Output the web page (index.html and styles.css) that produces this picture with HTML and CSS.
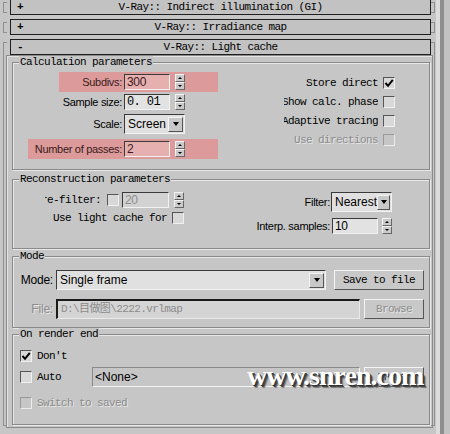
FILE: index.html
```html
<!DOCTYPE html>
<html lang="en">
<head>
    <meta charset="UTF-8">
    <meta name="viewport" content="width=device-width, initial-scale=1.0">
    <title>V-Ray:: Light cache</title>
    <link rel="stylesheet" href="styles.css">
</head>
<body>
<div class="window">
    <div class="panel">
        <div class="rollout first">
            <div class="rollout-header mono"><span class="toggle">+</span><span class="title">V-Ray:: Indirect illumination (GI)</span></div>
        </div>
        <div class="rollout">
            <div class="rollout-header mono"><span class="toggle">+</span><span class="title">V-Ray:: Irradiance map</span></div>
        </div>
        <div class="rollout open">
            <div class="rollout-header mono"><span class="toggle">-</span><span class="title">V-Ray:: Light cache</span></div>
            <div class="rollout-body">

                <!-- Calculation parameters -->
                <div class="group calc">
                    <div class="group-title mono">Calculation parameters</div>
                    <div class="calc-body">
                        <div class="calc-left">
                            <div class="lrow hl subdivs">
                                <span>Subdivs:</span>
                                <div class="spin-field"><div class="field pink">300</div><div class="spinner"><i></i><i></i></div></div>
                            </div>
                            <div class="lrow sample">
                                <span>Sample size:</span>
                                <div class="spin-field"><div class="field mono">0. 01</div><div class="spinner"><i></i><i></i></div></div>
                            </div>
                            <div class="lrow scale">
                                <span>Scale:</span>
                                <div class="dropdown scale-dd"><span>Screen</span><div class="dd-btn"></div></div>
                            </div>
                            <div class="lrow hl passes">
                                <span>Number of passes:</span>
                                <div class="spin-field"><div class="field pink">2</div><div class="spinner"><i></i><i></i></div></div>
                            </div>
                        </div>
                        <div class="calc-right mono">
                            <div class="crow">
                                <div class="clip"><span>Store direct</span></div>
                                <div class="cb on"><svg viewBox="0 0 10 10"><path d="M1.5 5 L4 7.8 L8.8 1.8" /></svg></div>
                            </div>
                            <div class="crow">
                                <div class="clip"><span>Show calc. phase</span></div>
                                <div class="cb"></div>
                            </div>
                            <div class="crow">
                                <div class="clip"><span>Adaptive tracing</span></div>
                                <div class="cb"></div>
                            </div>
                            <div class="crow disabled">
                                <div class="clip"><span>Use directions</span></div>
                                <div class="cb off"></div>
                            </div>
                        </div>
                    </div>
                </div>

                <!-- Reconstruction parameters -->
                <div class="group recon">
                    <div class="group-title mono">Reconstruction parameters</div>
                    <div class="recon-body">
                        <div class="recon-left">
                            <div class="prefilter">
                                <div class="clip mono pre-lbl"><span>Pre-filter:</span></div>
                                <div class="cb"></div>
                                <div class="spin-field"><div class="field off">20</div><div class="spinner"><i></i><i></i></div></div>
                            </div>
                            <div class="uselc">
                                <span class="mono">Use light cache for</span>
                                <div class="cb"></div>
                            </div>
                        </div>
                        <div class="recon-right">
                            <div class="rrow filter">
                                <span>Filter:</span>
                                <div class="dropdown filter-dd"><span>Nearest</span><div class="dd-btn"></div></div>
                            </div>
                            <div class="rrow interp">
                                <span>Interp. samples:</span>
                                <div class="spin-field"><div class="field">10</div><div class="spinner"><i></i><i></i></div></div>
                            </div>
                        </div>
                    </div>
                </div>

                <!-- Mode -->
                <div class="group mode">
                    <div class="group-title mono">Mode</div>
                    <div class="mode-body">
                        <div class="mrow">
                            <span class="mlabel">Mode:</span>
                            <div class="dropdown mode-dd"><span>Single frame</span><div class="dd-btn"></div></div>
                            <div class="btn mono save-btn">Save to file</div>
                        </div>
                        <div class="mrow file-row">
                            <span class="mlabel disabled">File:</span>
                            <div class="path-field mono">D:\目做图\2222.vrlmap</div>
                            <div class="btn mono browse disabled">Browse</div>
                        </div>
                    </div>
                </div>

                <!-- On render end -->
                <div class="group end">
                    <div class="group-title mono">On render end</div>
                    <div class="end-body mono">
                        <div class="erow">
                            <div class="cb on"><svg viewBox="0 0 10 10"><path d="M1.5 5 L4 7.8 L8.8 1.8" /></svg></div>
                            <span>Don't</span>
                        </div>
                        <div class="erow auto-row">
                            <div class="cb"></div>
                            <span class="auto-lbl">Auto</span>
                            <div class="none-field">&lt;None&gt;</div>
                            <div class="btn browse small">Browse</div>
                        </div>
                        <div class="erow switch-row disabled">
                            <div class="cb off"></div>
                            <span>Switch to saved</span>
                        </div>
                    </div>
                </div>

            </div>
        </div>
    </div>
    <div class="scroll"></div>
    <div class="watermark">www.snren.com</div>
</div>
</body>
</html>
```

FILE: styles.css
```css
:root {
    --panel: #c6c6c6;
    --dark-edge: #3a3a3a;
    --light-edge: #f2f2f2;
    --etch: #8a8a8a;
    --disabled: #8c8c8c;
    --pink: #dc9a9a;
    --pink-field: #e6b0b0;
}

* {
    margin: 0;
    padding: 0;
    box-sizing: border-box;
}

body {
    width: 450px;
    height: 434px;
    overflow: hidden;
    background: var(--panel);
    color: #000;
    font-family: "Liberation Sans", Arial, sans-serif;
    font-size: 11px;
    letter-spacing: -0.3px;
}

.mono {
    font-family: "Liberation Mono", "Noto Sans CJK SC", monospace;
    font-size: 11px;
    letter-spacing: -0.6px;
}

.window {
    position: relative;
    display: flex;
    height: 434px;
}

.panel {
    width: 436px;
}

.scroll {
    width: 14px;
    background: linear-gradient(to right, #dcdcdc 0 4px, #8e8e8e 4px 8px, #c2c2c2 8px);
}

/* rollouts */
.rollout {
    position: relative;
    margin: 0 1px 4px 3px;
    padding: 0 2px 0 3px;
}

.rollout.first {
    margin-top: -1px;
}

.rollout::before,
.rollout::after {
    content: "";
    position: absolute;
    top: 3px;
    bottom: 2px;
    width: 3px;
    border: 1px solid #909090;
}

.rollout::before {
    left: 0;
    border-right: none;
}

.rollout::after {
    right: 0;
    border-left: none;
}

.rollout-header {
    display: grid;
    height: 16px;
    margin: 0 2px 0 4px;
    border: 1px solid #1e1e1e;
    background: #c2c2c2;
    line-height: 14px;
}

.rollout-header > span {
    grid-area: 1 / 1;
}

.toggle {
    justify-self: start;
    padding-left: 6px;
    font-weight: bold;
}

.title {
    justify-self: center;
}

.rollout-body {
    border: 1px solid var(--etch);
    box-shadow: inset 1px 1px 0 #e4e4e4;
    padding: 0 2px 2px 5px;
}

/* group boxes */
.group {
    border: 1px solid var(--etch);
    box-shadow: 1px 1px 0 #e8e8e8, inset 1px 1px 0 #e8e8e8;
}

.group-title {
    width: fit-content;
    margin: -7px 0 0 6px;
    padding: 0 1px;
    line-height: 12px;
    background: var(--panel);
}

.calc { margin-top: 6px; height: 108px; }
.recon { margin-top: 9px; height: 70px; }
.mode { margin-top: 7px; height: 72px; }
.end { margin-top: 6px; height: 91px; }

/* shared controls */
.field {
    width: 46px;
    height: 16px;
    border: 1px solid;
    border-color: var(--dark-edge) var(--light-edge) var(--light-edge) var(--dark-edge);
    background: #e2e2e2;
    padding-left: 2px;
    line-height: 14px;
    font-size: 12px;
}

.field.pink {
    background: var(--pink-field);
    color: #3a1a1a;
}

.field.off {
    background: #d2d2d2;
    color: var(--disabled);
}

.spin-field {
    display: flex;
    gap: 5px;
}

.spinner {
    display: flex;
    flex-direction: column;
    width: 10px;
    height: 16px;
}

.spinner i {
    flex: 1;
    display: flex;
    align-items: center;
    justify-content: center;
    border: 1px solid;
    border-color: #f4f4f4 #666 #666 #f4f4f4;
    background: #cacaca;
}

.spinner i::after {
    content: "";
    border-left: 2px solid transparent;
    border-right: 2px solid transparent;
}

.spinner i:first-child::after {
    border-bottom: 2px solid #000;
}

.spinner i:last-child::after {
    border-top: 2px solid #000;
}

.dropdown {
    display: flex;
    align-items: center;
    height: 20px;
    border: 1px solid;
    border-color: var(--dark-edge) var(--light-edge) var(--light-edge) var(--dark-edge);
    background: #e0e0e0;
    padding: 0 1px 0 3px;
    font-size: 12px;
    letter-spacing: 0;
}

.dd-btn {
    display: flex;
    align-items: center;
    justify-content: center;
    width: 15px;
    height: 15px;
    margin-left: auto;
    border: 1px solid;
    border-color: #f4f4f4 #555 #555 #f4f4f4;
    background: #c8c8c8;
}

.dd-btn::after {
    content: "";
    border-top: 4px solid #000;
    border-left: 3.5px solid transparent;
    border-right: 3.5px solid transparent;
}

.cb {
    flex: none;
    width: 12px;
    height: 12px;
    border: 1px solid;
    border-color: #555 #f0f0f0 #f0f0f0 #555;
    background: #d8d8d8;
}

.cb.off {
    background: var(--panel);
    border-color: #999 #ececec #ececec #999;
}

.cb svg {
    display: block;
    width: 10px;
    height: 10px;
}

.cb svg path {
    fill: none;
    stroke: #000;
    stroke-width: 2;
}

.clip {
    display: flex;
    justify-content: flex-end;
    overflow: hidden;
    white-space: nowrap;
}

.clip span {
    flex: none;
}

.disabled,
.disabled .clip {
    color: var(--disabled);
    text-shadow: 1px 1px 0 #e6e6e6;
}

.btn {
    display: flex;
    align-items: center;
    justify-content: center;
    height: 20px;
    border: 1px solid;
    border-color: #f4f4f4 #555 #555 #f4f4f4;
    background: #c8c8c8;
}

/* calculation parameters */
.calc-body {
    display: flex;
    justify-content: space-between;
}

.calc-left {
    width: 205px;
    padding-top: 4px;
}

.lrow {
    display: flex;
    align-items: center;
    justify-content: flex-end;
    gap: 2px;
    height: 20px;
    padding-right: 33px;
}

.lrow.hl {
    background: var(--pink);
    color: #3a1a1a;
}

.subdivs { margin-left: 46px; }
.scale { margin-top: 2px; }
.passes { margin-top: 5px; margin-left: 15px; }

.scale-dd { width: 61px; }

.calc-right {
    width: 111px;
    margin-right: 34px;
    padding-top: 5px;
}

.crow {
    display: flex;
    align-items: center;
    gap: 5px;
    height: 19px;
}

.crow .clip {
    width: 94px;
}

/* reconstruction parameters */
.recon-body {
    display: flex;
    justify-content: space-between;
}

.recon-left {
    padding-top: 5px;
}

.prefilter {
    display: flex;
    align-items: center;
    height: 20px;
    padding-left: 32px;
}

.pre-lbl {
    width: 56px;
    margin-right: 6px;
}

.prefilter .cb {
    margin-right: 3px;
}

.prefilter .field {
    width: 47px;
}

.uselc {
    display: flex;
    align-items: center;
    gap: 5px;
    height: 16px;
    padding-left: 40px;
}

.recon-right {
    margin-right: 37px;
    padding-top: 7px;
}

.rrow {
    display: flex;
    align-items: center;
    justify-content: flex-end;
}

.filter {
    gap: 1px;
    height: 20px;
}

.filter-dd {
    width: 61px;
}

.interp {
    gap: 2px;
    height: 16px;
    margin-top: 6px;
}

.interp .spin-field {
    gap: 4px;
}

/* mode */
.mode-body {
    padding: 8px 5px 0 0;
}

.mrow {
    display: flex;
    align-items: center;
    height: 20px;
}

.file-row {
    margin-top: 9px;
}

.mlabel {
    width: 40px;
    margin-right: 3px;
    text-align: right;
    font-size: 12px;
    letter-spacing: -0.2px;
}

.mode-dd {
    flex: 1;
    margin-right: 8px;
}

.save-btn {
    width: 90px;
}

.path-field {
    flex: 1;
    height: 20px;
    margin-right: 4px;
    border: 1px solid;
    border-width: 2px 1px 1px 2px;
    border-color: #1a1a1a #eaeaea #eaeaea #1a1a1a;
    background: #d4d4d4;
    color: var(--disabled);
    padding-left: 3px;
    line-height: 16px;
}

.browse {
    width: 60px;
}

/* on render end */
.end-body {
    padding: 8px 5px 0 7px;
}

.erow {
    display: flex;
    align-items: center;
    gap: 5px;
    height: 16px;
}

.auto-row {
    height: 20px;
    margin-top: 3px;
}

.auto-lbl {
    width: 50px;
}

.none-field {
    flex: 1;
    height: 20px;
    border: 1px solid;
    border-color: #8a8a8a #f4f4f4 #f4f4f4 #8a8a8a;
    padding-left: 2px;
    line-height: 18px;
    font-family: "Liberation Sans", Arial, sans-serif;
    font-size: 12px;
    letter-spacing: 0;
}

.browse.small {
    margin-left: -1px;
    font-size: 10px;
}

.switch-row {
    margin-top: 8px;
}

/* watermark over the bottom group */
.watermark {
    position: absolute;
    left: 247px;
    top: 362px;
    font-family: "Liberation Serif", "Times New Roman", serif;
    font-size: 28px;
    font-weight: bold;
    letter-spacing: -1px;
    line-height: 28px;
    color: #fff;
    text-shadow: 1px 1px 0 #333, 2px 2px 0 #444, 3px 3px 1px #777;
}
```
